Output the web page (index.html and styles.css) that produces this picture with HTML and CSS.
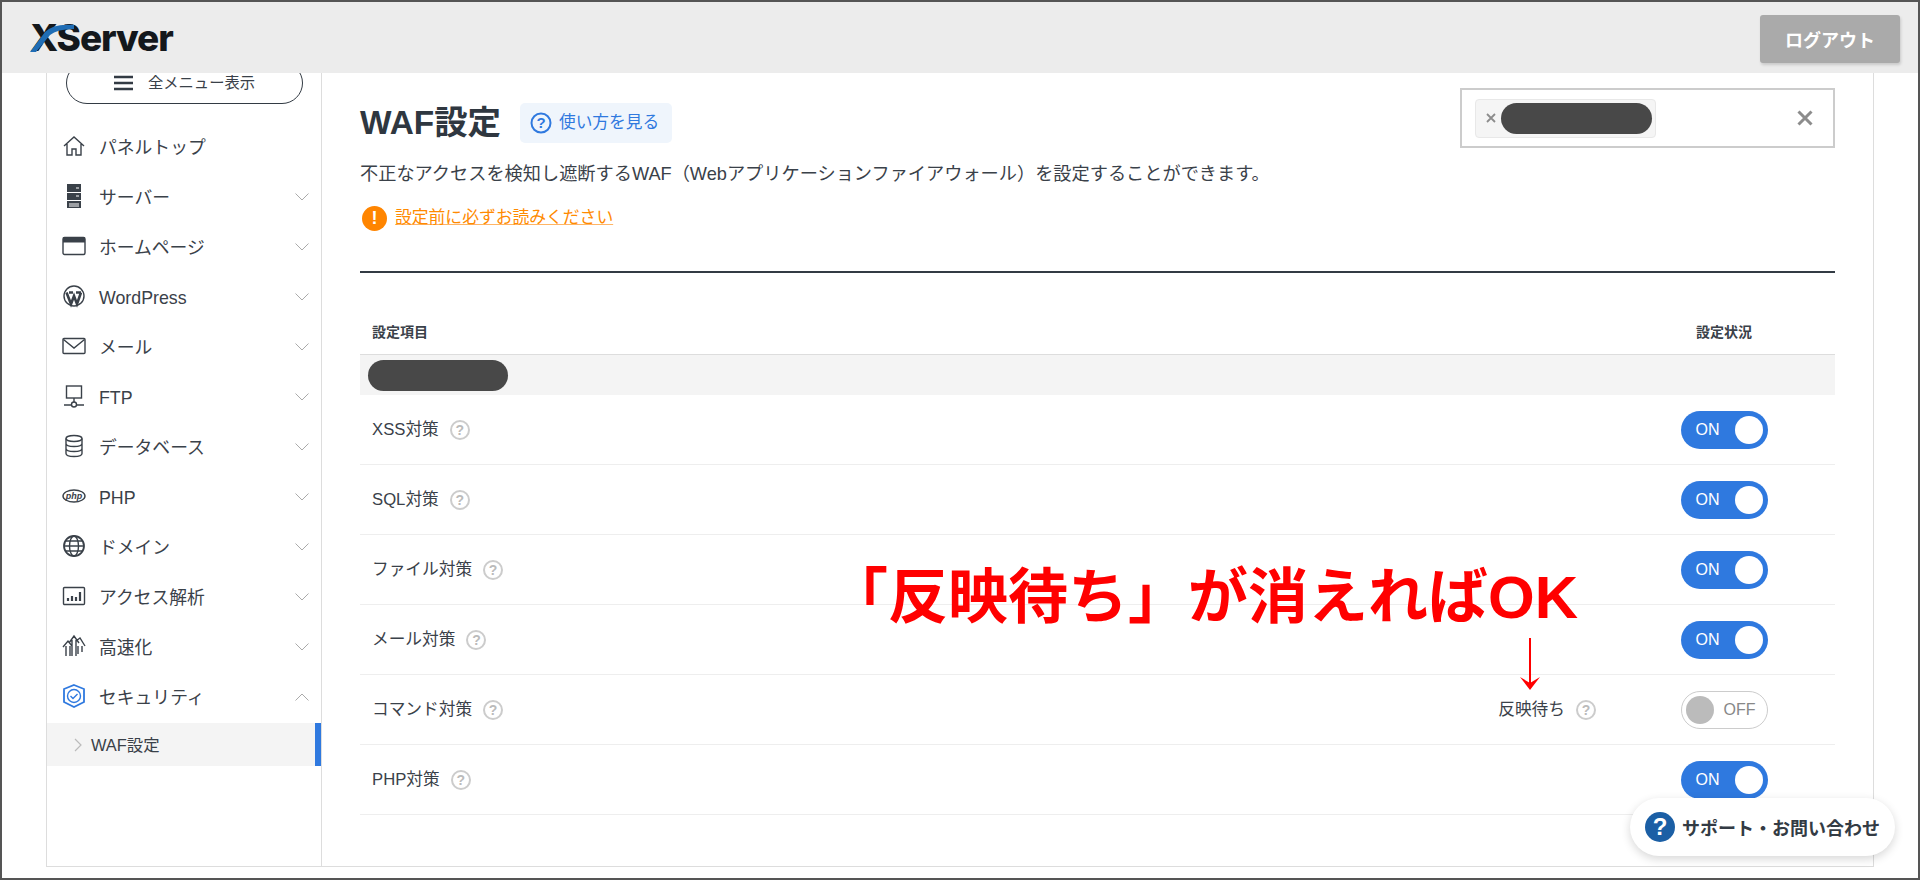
FILE: index.html
```html
<!DOCTYPE html>
<html lang="ja">
<head>
<meta charset="utf-8">
<title>WAF設定</title>
<link rel="stylesheet" href="styles.css">
</head>
<body>
<div class="frame">
  <header class="top">
    <div class="logo"><span class="logo-text">XServer</span>
      <svg class="logo-slash" width="46" height="30" viewBox="0 0 46 30"><path d="M0 29 L6 29 L20 12 Q27 6 44 6 L44 2 Q24 0 15 9 Z" fill="#1f6db5"/></svg>
    </div>
    <button class="logout">ログアウト</button>
  </header>
  <div class="panel">
    <aside class="side">
      <div class="menu-btn"><svg width="20" height="16" viewBox="0 0 20 16"><path d="M0 2h19M0 8h19M0 14h19" stroke="#333b44" stroke-width="2.4"/></svg><span>全メニュー表示</span></div>
      <nav class="nav">
        <a class="nav-row"><svg class="ico" viewBox="0 0 24 24"><path d="M2 12 12 3l10 9M5 10v11h5v-6h4v6h5V10"/></svg><span class="nav-label">パネルトップ</span></a>
        <a class="nav-row"><svg class="ico" viewBox="0 0 24 24"><path class="solid" d="M5 0h14v8H5zM5 9h14v7H5zM5 17h14v7H5z"/><path class="lite" d="M14 4h3M14 12h3M7 20h10M7 22h10"/></svg><span class="nav-label">サーバー</span><svg class="chev" viewBox="0 0 14 8"><path d="M.5.5 7 7 13.500.5"/></svg></a>
        <a class="nav-row"><svg class="ico" viewBox="0 0 24 24"><rect x="1" y="3.500" width="22" height="17" rx="1.500"/><path class="solid" d="M1 3.500h22v5H1z"/></svg><span class="nav-label">ホームページ</span><svg class="chev" viewBox="0 0 14 8"><path d="M.5.5 7 7 13.500.5"/></svg></a>
        <a class="nav-row"><svg class="ico" viewBox="0 0 24 24"><circle cx="12" cy="12" r="10"/><path stroke-width="2.600" d="M4.500 8.500 9 20l3-8 3 8 4-11.500M7 8.500h4M14 8.500h5"/></svg><span class="nav-label">WordPress</span><svg class="chev" viewBox="0 0 14 8"><path d="M.5.5 7 7 13.500.5"/></svg></a>
        <a class="nav-row"><svg class="ico" viewBox="0 0 24 24"><rect x="1" y="4.500" width="22" height="15" rx="1"/><path d="M1.500 5.500 12 14 22.500 5.500"/></svg><span class="nav-label">メール</span><svg class="chev" viewBox="0 0 14 8"><path d="M.5.5 7 7 13.500.5"/></svg></a>
        <a class="nav-row"><svg class="ico" viewBox="0 0 24 24"><rect x="4.500" y="2" width="15" height="12"/><path d="M12 14v4M2 21h7M15 21h7"/><circle cx="12" cy="20.500" r="2.500"/></svg><span class="nav-label">FTP</span><svg class="chev" viewBox="0 0 14 8"><path d="M.5.5 7 7 13.500.5"/></svg></a>
        <a class="nav-row"><svg class="ico" viewBox="0 0 24 24"><ellipse cx="12" cy="4.500" rx="8" ry="3"/><path d="M4 4.500v15c0 1.700 3.500 3 8 3s8-1.300 8-3v-15M4 9.500c0 1.700 3.500 3 8 3s8-1.300 8-3M4 14.500c0 1.700 3.500 3 8 3s8-1.300 8-3"/></svg><span class="nav-label">データベース</span><svg class="chev" viewBox="0 0 14 8"><path d="M.5.5 7 7 13.500.5"/></svg></a>
        <a class="nav-row"><svg class="ico" viewBox="0 0 24 24"><ellipse cx="12" cy="12" rx="11" ry="6"/><text class="php" x="12" y="14.500" text-anchor="middle">php</text></svg><span class="nav-label">PHP</span><svg class="chev" viewBox="0 0 14 8"><path d="M.5.5 7 7 13.500.5"/></svg></a>
        <a class="nav-row"><svg class="ico" viewBox="0 0 24 24"><circle cx="12" cy="12" r="10" stroke-width="1.800"/><ellipse cx="12" cy="12" rx="4.500" ry="10"/><path d="M2 12h20M3.500 7h17M3.500 17h17"/></svg><span class="nav-label">ドメイン</span><svg class="chev" viewBox="0 0 14 8"><path d="M.5.5 7 7 13.500.5"/></svg></a>
        <a class="nav-row"><svg class="ico" viewBox="0 0 24 24"><rect x="1.500" y="3.500" width="21" height="17" rx="1"/><path stroke-width="2.200" d="M6 17v-3M10 17v-5M14 17v-4M18 17V8"/></svg><span class="nav-label">アクセス解析</span><svg class="chev" viewBox="0 0 14 8"><path d="M.5.5 7 7 13.500.5"/></svg></a>
        <a class="nav-row"><svg class="ico" viewBox="0 0 24 24"><path d="M1 13 6 7l4 5M4 12v10M8 12v10M7 9l5-7 5 7M10 6v16M14 6v16M14 7l4-3 5 8M16 12v8M20 12v6"/></svg><span class="nav-label">高速化</span><svg class="chev" viewBox="0 0 14 8"><path d="M.5.5 7 7 13.500.5"/></svg></a>
        <a class="nav-row is-open"><svg class="ico ico-blue" viewBox="0 0 24 24"><path stroke-width="1.800" d="M12 1 22 5v13l-10 5L2 18V5z"/><circle cx="12" cy="12" r="6.500"/><path d="m8.500 12 2.500 2.500 4.500-4.500"/></svg><span class="nav-label">セキュリティ</span><svg class="chev" viewBox="0 0 14 8"><path d="M.5 7.500 7 1l6.500 6.500"/></svg></a>
        <a class="sub-row"><svg class="sub-chev" viewBox="0 0 8 14"><path d="M1 1l6 6-6 6"/></svg><span>WAF設定</span></a>
      </nav>
    </aside>
    <main class="main">
      <div class="head">
        <div class="title-group">
          <h1 class="title">WAF設定</h1>
          <a class="how"><svg width="22" height="22" viewBox="0 0 22 22"><circle cx="11" cy="11" r="9.500" fill="none" stroke="#2f79df" stroke-width="2"/><text class="q" x="11" y="16" text-anchor="middle">?</text></svg><span>使い方を見る</span></a>
        </div>
        <div class="picker">
          <div class="tag"><svg width="10" height="10" viewBox="0 0 10 10"><path d="M1 1l8 8M9 1l-8 8" stroke="#8c8c8c" stroke-width="1.800"/></svg><span class="mask mask-tag"></span></div>
          <svg width="16" height="16" viewBox="0 0 16 16"><path d="M1.500 1.500l13 13M14.500 1.500l-13 13" stroke="#8c8c8c" stroke-width="3"/></svg>
        </div>
      </div>
      <p class="desc">不正なアクセスを検知し遮断するWAF（Webアプリケーションファイアウォール）を設定することができます。</p>
      <div class="notice"><span class="warn">!</span><a class="notice-link">設定前に必ずお読みください</a></div>
      <hr class="rule">
      <div class="thead"><span>設定項目</span><span class="th-status">設定状況</span></div>
      <div class="domain"><span class="mask mask-domain"></span></div>
      <div class="row"><div class="name">XSS対策<span class="help">?</span></div><div class="status"><span class="toggle"><b>ON</b><i></i></span></div></div>
      <div class="row"><div class="name">SQL対策<span class="help">?</span></div><div class="status"><span class="toggle"><b>ON</b><i></i></span></div></div>
      <div class="row"><div class="name">ファイル対策<span class="help">?</span></div><div class="status"><span class="toggle"><b>ON</b><i></i></span></div></div>
      <div class="row"><div class="name">メール対策<span class="help">?</span></div><div class="status"><span class="toggle"><b>ON</b><i></i></span></div></div>
      <div class="row"><div class="name">コマンド対策<span class="help">?</span></div><div class="pending">反映待ち<span class="help">?</span></div><div class="status"><span class="toggle off"><i></i><b>OFF</b></span></div></div>
      <div class="row"><div class="name">PHP対策<span class="help">?</span></div><div class="status"><span class="toggle"><b>ON</b><i></i></span></div></div>
    </main>
  </div>
  <div class="note">「反映待ち」が消えればOK</div>
  <svg class="note-arrow" width="22" height="52" viewBox="0 0 22 52"><path d="M11 0v46" stroke="#f00" stroke-width="2"/><path d="M1 39 11 52 21 39 11 45Z" fill="#f00"/></svg>
  <a class="support"><span class="support-q">?</span><span>サポート・お問い合わせ</span></a>
</div>
</body>
</html>
```
FILE: styles.css
```css
* { box-sizing: border-box; }
html, body { margin: 0; padding: 0; background: #fff; }
body {
  font-family: "Liberation Sans", "Noto Sans CJK JP", sans-serif;
  color: #3a4149;
}
.frame {
  position: relative;
  width: 1920px;
  height: 880px;
  border: 2px solid #555;
  overflow: hidden;
}
.top {
  position: relative;
  z-index: 5;
  height: 71px;
  background: #ececec;
  display: flex;
  align-items: center;
  justify-content: space-between;
  padding: 0 18px 0 28px;
}
.logo { position: relative; height: 36px; display: flex; align-items: center; margin-top: 1px; }
.logo-text {
  font-family: Inter, "Liberation Sans", sans-serif;
  font-weight: 800;
  font-size: 37px;
  letter-spacing: -1.1px;
  color: #14181c;
  line-height: 36px;
}
.logo-slash { position: absolute; left: 0; top: 3px; }
.logout {
  width: 140px;
  height: 48px;
  margin-top: 3px;
  border: 0;
  border-radius: 3px;
  background: #aaa;
  color: #fff;
  font: bold 18px "Liberation Sans", "Noto Sans CJK JP", sans-serif;
  box-shadow: 1px 2px 3px rgba(0, 0, 0, .15);
}
.panel {
  width: 1828px;
  height: 794px;
  margin-left: 44px;
  border: 1px solid #ddd;
  border-top: 0;
  display: flex;
}
.side { width: 275px; flex: none; border-right: 1px solid #ddd; }
.menu-btn {
  width: 237px;
  height: 42px;
  margin: -11px 0 0 19px;
  border: 1px solid #333b44;
  border-radius: 21px;
  display: flex;
  align-items: center;
  justify-content: center;
  gap: 14px;
  font-size: 15.300px;
  line-height: 20px;
}
.nav { margin-top: 17px; }
.nav-row {
  height: 50px;
  display: flex;
  align-items: center;
  padding-left: 15px;
  position: relative;
}
.ico {
  width: 24px;
  height: 24px;
  flex: none;
  fill: none;
  stroke: #3a4149;
  stroke-width: 1.400;
}
.ico .solid { fill: #3a4149; stroke: none; }
.ico .lite { stroke: #fff; stroke-width: 1; }
.ico .php { font: italic bold 9px "Liberation Sans", sans-serif; fill: #3a4149; stroke: none; }
.ico-blue { stroke: #2f79df; }
.nav-label { margin-left: 13px; padding-top: 3px; font-size: 17.800px; line-height: 24px; }
.chev {
  position: absolute;
  left: 248px;
  top: 22px;
  width: 14px;
  height: 8px;
  fill: none;
  stroke: #aaa;
  stroke-width: 1;
}
.sub-row {
  height: 43px;
  margin-top: 2px;
  background: #f4f4f4;
  border-right: 6px solid #2f79df;
  display: flex;
  align-items: center;
  padding-left: 27px;
  gap: 9px;
  font-size: 16.400px;
  line-height: 22px;
}
.sub-chev { width: 8px; height: 14px; fill: none; stroke: #bbb; stroke-width: 1.200; }
.main { flex: 1; padding: 15px 38px 0; }
.head { height: 60px; display: flex; justify-content: space-between; align-items: flex-start; }
.title-group { display: flex; align-items: center; gap: 19px; margin-top: 15px; }
.title { margin: 0; font-size: 33.400px; font-weight: bold; color: #2f3740; line-height: 40px; }
.how {
  height: 40px;
  width: 152px;
  display: flex;
  align-items: center;
  gap: 7px;
  padding-left: 10px;
  background: #eff5fc;
  border-radius: 5px;
  color: #2f79df;
  font-size: 16.700px;
  line-height: 22px;
}
.q { font: bold 15px "Liberation Sans", sans-serif; fill: #2f79df; }
.picker {
  width: 375px;
  height: 60px;
  border: 2px solid #ccc;
  display: flex;
  align-items: center;
  justify-content: space-between;
  padding: 0 20px 0 13px;
}
.tag {
  width: 181px;
  height: 39px;
  background: #f5f5f5;
  border: 1px solid #e8e8e8;
  border-radius: 4px;
  display: flex;
  align-items: center;
  padding-left: 10px;
  gap: 5px;
}
.mask { display: block; background: #484848; border-radius: 16px; }
.mask-tag { width: 151px; height: 31px; }
.mask-domain { width: 140px; height: 31px; margin-left: 8px; }
.desc { margin: 13px 0 0; font-size: 18.200px; line-height: 26px; }
.notice { margin-top: 17px; height: 28px; display: flex; align-items: center; gap: 8px; padding-left: 2px; }
.warn {
  width: 25px;
  height: 25px;
  border-radius: 50%;
  background: #ff8500;
  color: #fff;
  font-weight: bold;
  font-size: 18px;
  line-height: 25px;
  text-align: center;
}
.notice-link {
  color: #ff8a00;
  font-size: 16.800px;
  line-height: 24px;
  text-decoration: underline;
  text-decoration-color: #ffb566;
}
.rule { margin: 39px 0 0; height: 2px; border: 0; background: #333b44; }
.thead {
  height: 82px;
  padding: 48px 0 0 12px;
  border-bottom: 1px solid #ddd;
  font-size: 14px;
  font-weight: bold;
  line-height: 22px;
  display: flex;
  justify-content: space-between;
}
.th-status { width: 222px; text-align: center; }
.domain { height: 40px; background: #f4f4f4; display: flex; align-items: center; }
.row {
  height: 70px;
  border-bottom: 1px solid #eee;
  display: flex;
  align-items: center;
  padding-left: 12px;
}
.name { flex: 1; display: flex; align-items: center; font-size: 16.700px; line-height: 24px; }
.pending { display: flex; align-items: center; font-size: 16.700px; line-height: 24px; margin-right: 17px; }
.help {
  width: 20px;
  height: 20px;
  margin-left: 11px;
  border: 2px solid #ccc;
  border-radius: 50%;
  color: #bbb;
  font-size: 14px;
  font-weight: bold;
  line-height: 16px;
  text-align: center;
}
.status { width: 222px; flex: none; display: flex; justify-content: center; }
.toggle {
  width: 87px;
  height: 38px;
  border-radius: 19px;
  background: #2f79df;
  color: #fff;
  display: flex;
  align-items: center;
  justify-content: space-between;
  padding: 0 5px 0 15px;
}
.toggle b { font-weight: normal; font-size: 16px; }
.toggle i { display: block; width: 28px; height: 28px; border-radius: 50%; background: #fff; }
.toggle.off { background: #fff; border: 1px solid #ccc; color: #888; padding: 0 11px 0 4px; }
.toggle.off i { background: #bbb; }
.note {
  position: absolute;
  left: 826px;
  top: 561px;
  font-weight: bold;
  font-size: 60px;
  line-height: 70px;
  color: #f00;
  white-space: nowrap;
}
.note-arrow { position: absolute; left: 1517px; top: 636px; }
.support {
  position: absolute;
  left: 1628px;
  top: 796px;
  width: 265px;
  height: 58px;
  border-radius: 29px;
  background: #fff;
  box-shadow: 0 3px 10px rgba(0, 0, 0, .16);
  display: flex;
  align-items: center;
  gap: 7px;
  padding-left: 15px;
  font-size: 18px;
  font-weight: bold;
  color: #333b44;
  white-space: nowrap;
}
.support-q {
  width: 30px;
  height: 30px;
  border-radius: 50%;
  background: #1b5fa5;
  color: #fff;
  font-size: 24px;
  line-height: 30px;
  text-align: center;
}
```
